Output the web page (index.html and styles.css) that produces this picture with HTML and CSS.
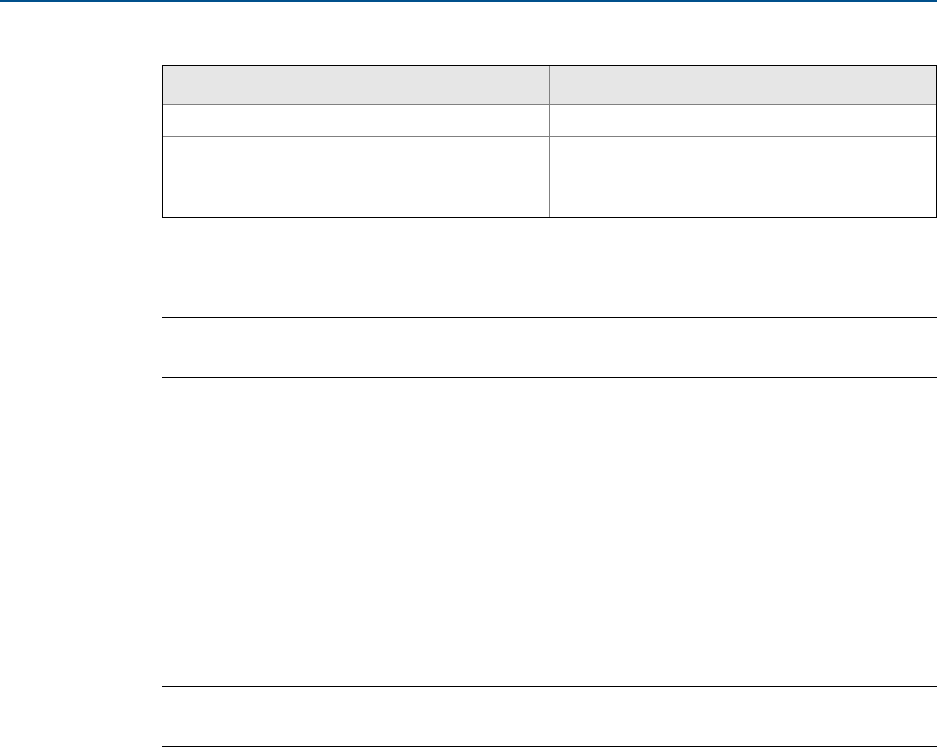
FILE: index.html
```html
<!DOCTYPE html>
<html lang="en">
<head>
<meta charset="utf-8">
<title>Page</title>
<link rel="stylesheet" href="styles.css">
</head>
<body>
<div class="topbar"></div>
<main class="content">
  <div class="tbl">
    <div class="row head">
      <div class="cell"></div>
      <div class="cell"></div>
    </div>
    <div class="row r1">
      <div class="cell"></div>
      <div class="cell"></div>
    </div>
    <div class="row r2">
      <div class="cell"></div>
      <div class="cell"></div>
    </div>
  </div>
  <div class="note first"></div>
  <div class="note second"></div>
</main>
</body>
</html>
```
FILE: styles.css
```css
html, body {
  margin: 0;
  padding: 0;
  background: #fff;
  font-family: "Liberation Sans", Arial, sans-serif;
}
.topbar {
  height: 2px;
  background: #00508c;
}
.content {
  padding-left: 162px;
}
.tbl {
  margin-top: 63px;
  width: 775px;
  box-sizing: border-box;
  border: 1px solid #000;
}
.row {
  display: flex;
}
.row + .row {
  border-top: 1px solid #808080;
}
.cell {
  flex: 0 0 386px;
}
.cell + .cell {
  border-left: 1px solid #808080;
}
.head {
  height: 38px;
  background: #e6e6e6;
}
.r1 { height: 31px; }
.r2 { height: 80px; }
.note {
  width: 775px;
  height: 59px;
  border-top: 1px solid #000;
  border-bottom: 1px solid #000;
}
.note.first { margin-top: 99px; }
.note.second { margin-top: 308px; }
```
